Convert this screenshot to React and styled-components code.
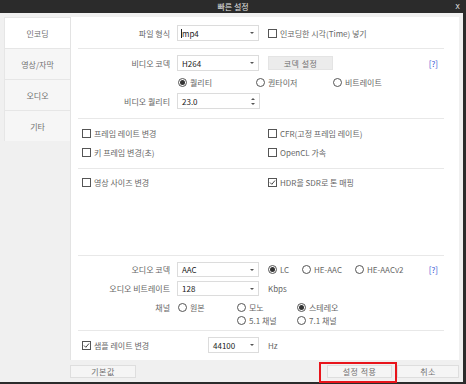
import React from 'react';
import styled, { createGlobalStyle } from 'styled-components';

const GlobalStyle = createGlobalStyle`
    html, body { margin: 0; padding: 0; }
    body {
        width: 466px;
        height: 384px;
        overflow: hidden;
        font-family: "Noto Sans CJK KR", "Noto Sans", sans-serif;
        font-size: 8px;
        color: #666;
    }
    * { box-sizing: border-box; }
`

const Check = ({checked, children}) => (
    <CheckItem>
        <Box>
            {checked && (
                <svg width="7" height="7" viewBox="0 0 7 7">
                    <path d="M1 3.5 L2.8 5.3 L6 1.5" fill="none" stroke="#444" strokeWidth="1"/>
                </svg>
            )}
        </Box>
        <span>{children}</span>
    </CheckItem>
);

const Radio = ({checked, children}) => (
    <CheckItem>
        <Circle>{checked && <Dot/>}</Circle>
        <span>{children}</span>
    </CheckItem>
);

const Select = ({value, width, height, caret}) => (
    <SelectBox $w={width} $h={height}>
        {caret && <Caret/>}
        <span>{value}</span>
        <Arrow/>
    </SelectBox>
);

const App = () => {
    const tabs = ['인코딩', '영상/자막', '오디오', '기타'];
    return (
        <Window>
            <GlobalStyle/>
            <TitleBar>
                <span/>
                <span>빠른 설정</span>
                <CloseX>x</CloseX>
            </TitleBar>
            <Body>
                <Main>
                    <Tabs>
                        {tabs.map((t, i) => <Tab key={t} $active={i === 0}>{t}</Tab>)}
                    </Tabs>
                    <Panel>
                        <Section $h={31} $pt={8}>
                            <FormRow $h={16}>
                                <Label>파일 형식</Label>
                                <Select value="mp4" caret/>
                                <After><Check>인코딩한 시각(Time) 넣기</Check></After>
                            </FormRow>
                        </Section>
                        <Divider/>
                        <Section $h={69} $pt={6}>
                            <FormRow $h={16}>
                                <Label>비디오 코덱</Label>
                                <Select value="H264"/>
                                <After><GrayButton>코덱 설정</GrayButton></After>
                                <Help>[?]</Help>
                            </FormRow>
                            <RadioGrid $cols="78px 77px auto" $h={22} $ml={100}>
                                <Radio checked>퀄리티</Radio>
                                <Radio>퀀타이저</Radio>
                                <Radio>비트레이트</Radio>
                            </RadioGrid>
                            <FormRow $h={16}>
                                <Label>비디오 퀄리티</Label>
                                <SelectBox $w={83} $h={16}>
                                    <span>23.0</span>
                                    <Spin><UpTri/><DownTri/></Spin>
                                </SelectBox>
                            </FormRow>
                        </Section>
                        <Divider/>
                        <Section $h={49} $pt={5}>
                            <CheckGrid $rh={19}>
                                <Check>프레임 레이트 변경</Check>
                                <Check>CFR(고정 프레임 레이트)</Check>
                                <Check>키 프레임 변경(초)</Check>
                                <Check>OpenCL 가속</Check>
                            </CheckGrid>
                        </Section>
                        <Divider/>
                        <Section $grow $pt={4}>
                            <CheckGrid $rh={18}>
                                <Check>영상 사이즈 변경</Check>
                                <Check checked>HDR을 SDR로 톤 매핑</Check>
                            </CheckGrid>
                        </Section>
                        <Divider/>
                        <Section $h={74} $pt={6}>
                            <FormRow $h={15}>
                                <Label>오디오 코덱</Label>
                                <Select value="AAC" height={15}/>
                                <After>
                                    <RadioGrid $cols="34px 53px auto">
                                        <Radio checked>LC</Radio>
                                        <Radio>HE-AAC</Radio>
                                        <Radio>HE-AACv2</Radio>
                                    </RadioGrid>
                                </After>
                                <Help>[?]</Help>
                            </FormRow>
                            <FormRow $h={15} $mt={4}>
                                <Label>오디오 비트레이트</Label>
                                <Select value="128" height={15}/>
                                <After>Kbps</After>
                            </FormRow>
                            <ChannelRow>
                                <Label $lh={13}>채널</Label>
                                <RadioGrid $cols="59px 60px auto" $rh={13} $ml={1}>
                                    <Radio>원본</Radio>
                                    <Radio>모노</Radio>
                                    <Radio checked>스테레오</Radio>
                                    <span/>
                                    <Radio>5.1 채널</Radio>
                                    <Radio>7.1 채널</Radio>
                                </RadioGrid>
                            </ChannelRow>
                        </Section>
                        <Divider/>
                        <Section $h={29} $pt={6}>
                            <FormRow $h={16} $pl={4}>
                                <SampleCheck><Check checked>샘플 레이트 변경</Check></SampleCheck>
                                <Select value="44100" width={51}/>
                                <After>Hz</After>
                            </FormRow>
                        </Section>
                    </Panel>
                </Main>
                <Footer>
                    <FooterButton $w={66} $mt={5}>기본값</FooterButton>
                    <Spacer/>
                    <Highlight>
                        <FooterButton $w={65} $mt={1}>설정 적용</FooterButton>
                    </Highlight>
                    <FooterButton $w={62} $mt={5}>취소</FooterButton>
                </Footer>
            </Body>
        </Window>
    );
}

const Window = styled.div`
    width: 466px;
    height: 384px;
    display: flex;
    flex-direction: column;
    background: #2b2b2b;
`
const TitleBar = styled.div`
    height: 13px;
    flex: none;
    display: grid;
    grid-template-columns: 1fr auto 1fr;
    align-items: center;
    color: #e4e4e4;
    font-size: 8px;
    line-height: 13px;
`
const CloseX = styled.span`
    justify-self: end;
    margin-right: 6px;
    color: #d8d8d8;
    font-family: "DejaVu Sans", sans-serif;
    font-size: 8px;
`
const Body = styled.div`
    flex: 1;
    margin: 0 3px 2px 0;
    background: #f0f0f0;
    padding: 4px 4px 0 4px;
    display: flex;
    flex-direction: column;
`
const Main = styled.div`
    height: 343px;
    display: flex;
`
const Tabs = styled.div`
    width: 66px;
    flex: none;
    display: flex;
    flex-direction: column;
`
const Tab = styled.div`
    height: 31px;
    display: flex;
    align-items: center;
    justify-content: center;
    color: #707070;
    background: ${props => props.$active ? '#ffffff' : '#f6f6f6'};
    border-top: 1px solid #e6e6e6;
    border-left: 1px solid #e6e6e6;
`
const Panel = styled.div`
    flex: 1;
    background: #fff;
    border-left: 1px solid #e3e3e3;
    padding: 0 15px 0 7px;
    display: flex;
    flex-direction: column;
`
const Section = styled.div`
    flex: ${props => props.$grow ? '1' : 'none'};
    height: ${props => props.$h ? props.$h + 'px' : 'auto'};
    padding-top: ${props => props.$pt || 0}px;
    display: flex;
    flex-direction: column;
`
const Divider = styled.div`
    height: 1px;
    flex: none;
    background: #e8e8e8;
`
const FormRow = styled.div`
    height: ${props => props.$h}px;
    margin-top: ${props => props.$mt || 0}px;
    padding-left: ${props => props.$pl || 0}px;
    display: flex;
    align-items: center;
`
const ChannelRow = styled.div`
    margin-top: 5px;
    display: flex;
    align-items: flex-start;
`
const Label = styled.div`
    width: 92px;
    margin-right: 7px;
    flex: none;
    text-align: right;
    color: #666;
    line-height: ${props => props.$lh ? props.$lh + 'px' : 'normal'};
`
const SelectBox = styled.div`
    width: ${props => props.$w || 82}px;
    height: ${props => props.$h || 16}px;
    flex: none;
    border: 1px solid #dcdcdc;
    background: #fff;
    display: flex;
    align-items: center;
    padding: 0 3px 0 4px;
    color: #222;
`
const Caret = styled.span`
    width: 1px;
    height: 9px;
    background: #222;
    margin-left: -1px;
`
const Arrow = styled.span`
    margin-left: auto;
    margin-right: 1px;
    width: 0;
    height: 0;
    border-left: 2px solid transparent;
    border-right: 2px solid transparent;
    border-top: 2.5px solid #555;
`
const Spin = styled.span`
    margin-left: auto;
    margin-right: 1px;
    display: flex;
    flex-direction: column;
    gap: 3px;
`
const UpTri = styled.span`
    width: 0;
    height: 0;
    border-left: 2px solid transparent;
    border-right: 2px solid transparent;
    border-bottom: 2.5px solid #555;
`
const DownTri = styled.span`
    width: 0;
    height: 0;
    border-left: 2px solid transparent;
    border-right: 2px solid transparent;
    border-top: 2.5px solid #555;
`
const After = styled.div`
    margin-left: 9px;
    display: flex;
    align-items: center;
    color: #666;
`
const GrayButton = styled.div`
    width: 65px;
    height: 14px;
    background: #ececec;
    border: 1px solid #e4e4e4;
    color: #707070;
    display: flex;
    align-items: center;
    justify-content: center;
    letter-spacing: 0.5px;
`
const Help = styled.span`
    margin-left: auto;
    margin-right: 6px;
    color: #3153d4;
`
const CheckItem = styled.div`
    display: flex;
    align-items: center;
    gap: 3px;
    white-space: nowrap;
`
const Box = styled.span`
    width: 9px;
    height: 9px;
    flex: none;
    border: 1px solid #555;
    background: #fff;
    display: flex;
    align-items: center;
    justify-content: center;
`
const Circle = styled.span`
    width: 9px;
    height: 9px;
    flex: none;
    border: 1px solid #555;
    border-radius: 50%;
    display: flex;
    align-items: center;
    justify-content: center;
`
const Dot = styled.span`
    width: 5px;
    height: 5px;
    border-radius: 50%;
    background: #333;
`
const RadioGrid = styled.div`
    display: grid;
    grid-template-columns: ${props => props.$cols};
    grid-auto-rows: ${props => props.$rh ? props.$rh + 'px' : 'auto'};
    align-items: center;
    height: ${props => props.$h ? props.$h + 'px' : 'auto'};
    margin-left: ${props => props.$ml || 0}px;
`
const CheckGrid = styled.div`
    display: grid;
    grid-template-columns: 186px auto;
    grid-auto-rows: ${props => props.$rh}px;
    align-items: center;
    padding-left: 4px;
`
const SampleCheck = styled.div`
    width: 126px;
    flex: none;
`
const Footer = styled.div`
    height: 22px;
    flex: none;
    display: flex;
    align-items: flex-start;
    padding-left: 66px;
`
const Spacer = styled.div`
    flex: 1;
`
const FooterButton = styled.div`
    width: ${props => props.$w}px;
    height: 13px;
    margin-top: ${props => props.$mt || 0}px;
    flex: none;
    background: #f5f5f5;
    border: 1px solid #dedede;
    color: #707070;
    display: flex;
    align-items: center;
    justify-content: center;
    letter-spacing: 0.5px;
`
const Highlight = styled.div`
    margin-top: 2px;
    height: 21px;
    border: 2px solid #e8141b;
    padding: 0 3px 0 6px;
`

export default App;
